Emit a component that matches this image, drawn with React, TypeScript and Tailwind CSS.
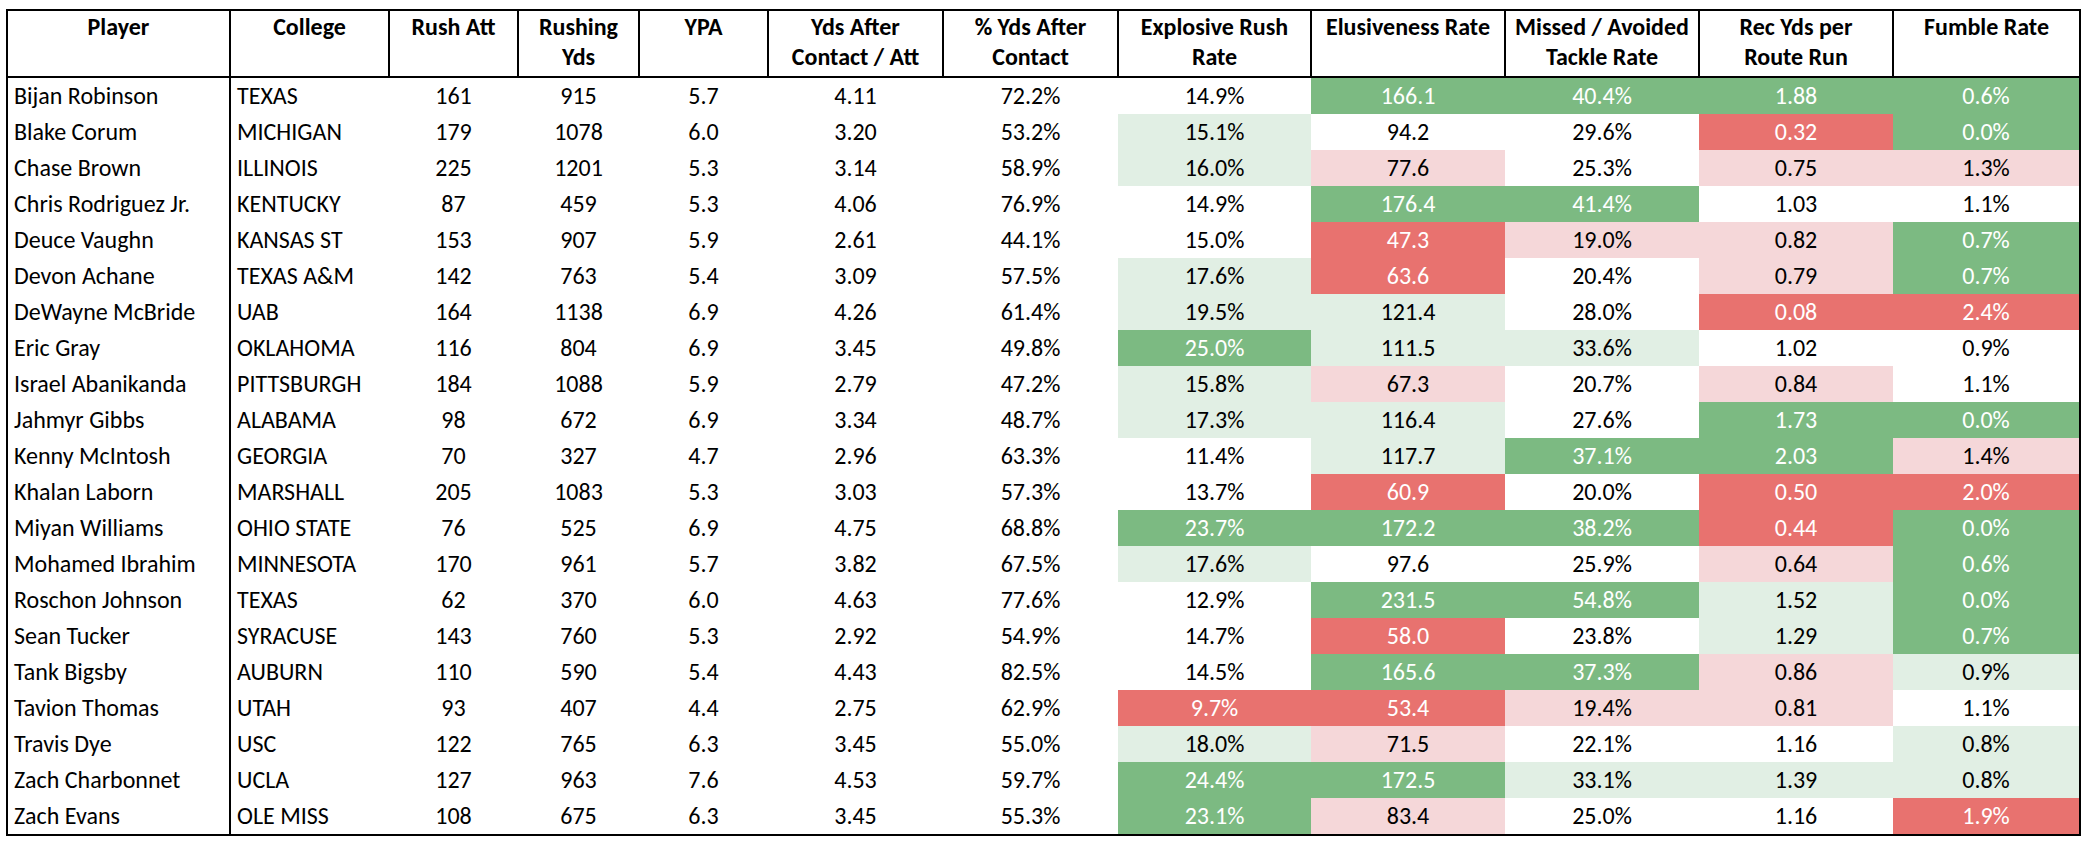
type Tone = "" | "G" | "g" | "r" | "R";

const tone: Record<string, string> = {
  "": "bg-white text-black",
  G: "bg-[#7cba82] text-white",
  g: "bg-[#e1efe4] text-black",
  r: "bg-[#f5d7d9] text-black",
  R: "bg-[#e8726f] text-white",
};

const headers = [
  "Player",
  "College",
  "Rush Att",
  "Rushing Yds",
  "YPA",
  "Yds After Contact / Att",
  "% Yds After Contact",
  "Explosive Rush Rate",
  "Elusiveness Rate",
  "Missed / Avoided Tackle Rate",
  "Rec Yds per Route Run",
  "Fumble Rate",
];

const widths = [223, 159, 129, 121, 129, 175, 175, 193, 194, 194, 194, 187];

// player, college, att, yds, ypa, yac/att, %yac, [value, tone] x5
const rows: [string, string, string, string, string, string, string, [string, Tone][]][] = [
  ["Bijan Robinson", "TEXAS", "161", "915", "5.7", "4.11", "72.2%", [["14.9%", ""], ["166.1", "G"], ["40.4%", "G"], ["1.88", "G"], ["0.6%", "G"]]],
  ["Blake Corum", "MICHIGAN", "179", "1078", "6.0", "3.20", "53.2%", [["15.1%", "g"], ["94.2", ""], ["29.6%", ""], ["0.32", "R"], ["0.0%", "G"]]],
  ["Chase Brown", "ILLINOIS", "225", "1201", "5.3", "3.14", "58.9%", [["16.0%", "g"], ["77.6", "r"], ["25.3%", ""], ["0.75", "r"], ["1.3%", "r"]]],
  ["Chris Rodriguez Jr.", "KENTUCKY", "87", "459", "5.3", "4.06", "76.9%", [["14.9%", ""], ["176.4", "G"], ["41.4%", "G"], ["1.03", ""], ["1.1%", ""]]],
  ["Deuce Vaughn", "KANSAS ST", "153", "907", "5.9", "2.61", "44.1%", [["15.0%", ""], ["47.3", "R"], ["19.0%", "r"], ["0.82", "r"], ["0.7%", "G"]]],
  ["Devon Achane", "TEXAS A&M", "142", "763", "5.4", "3.09", "57.5%", [["17.6%", "g"], ["63.6", "R"], ["20.4%", ""], ["0.79", "r"], ["0.7%", "G"]]],
  ["DeWayne McBride", "UAB", "164", "1138", "6.9", "4.26", "61.4%", [["19.5%", "g"], ["121.4", "g"], ["28.0%", ""], ["0.08", "R"], ["2.4%", "R"]]],
  ["Eric Gray", "OKLAHOMA", "116", "804", "6.9", "3.45", "49.8%", [["25.0%", "G"], ["111.5", "g"], ["33.6%", "g"], ["1.02", ""], ["0.9%", ""]]],
  ["Israel Abanikanda", "PITTSBURGH", "184", "1088", "5.9", "2.79", "47.2%", [["15.8%", "g"], ["67.3", "r"], ["20.7%", ""], ["0.84", "r"], ["1.1%", ""]]],
  ["Jahmyr Gibbs", "ALABAMA", "98", "672", "6.9", "3.34", "48.7%", [["17.3%", "g"], ["116.4", "g"], ["27.6%", ""], ["1.73", "G"], ["0.0%", "G"]]],
  ["Kenny McIntosh", "GEORGIA", "70", "327", "4.7", "2.96", "63.3%", [["11.4%", ""], ["117.7", "g"], ["37.1%", "G"], ["2.03", "G"], ["1.4%", "r"]]],
  ["Khalan Laborn", "MARSHALL", "205", "1083", "5.3", "3.03", "57.3%", [["13.7%", ""], ["60.9", "R"], ["20.0%", ""], ["0.50", "R"], ["2.0%", "R"]]],
  ["Miyan Williams", "OHIO STATE", "76", "525", "6.9", "4.75", "68.8%", [["23.7%", "G"], ["172.2", "G"], ["38.2%", "G"], ["0.44", "R"], ["0.0%", "G"]]],
  ["Mohamed Ibrahim", "MINNESOTA", "170", "961", "5.7", "3.82", "67.5%", [["17.6%", "g"], ["97.6", ""], ["25.9%", ""], ["0.64", "r"], ["0.6%", "G"]]],
  ["Roschon Johnson", "TEXAS", "62", "370", "6.0", "4.63", "77.6%", [["12.9%", ""], ["231.5", "G"], ["54.8%", "G"], ["1.52", "g"], ["0.0%", "G"]]],
  ["Sean Tucker", "SYRACUSE", "143", "760", "5.3", "2.92", "54.9%", [["14.7%", ""], ["58.0", "R"], ["23.8%", ""], ["1.29", "g"], ["0.7%", "G"]]],
  ["Tank Bigsby", "AUBURN", "110", "590", "5.4", "4.43", "82.5%", [["14.5%", ""], ["165.6", "G"], ["37.3%", "G"], ["0.86", "r"], ["0.9%", "g"]]],
  ["Tavion Thomas", "UTAH", "93", "407", "4.4", "2.75", "62.9%", [["9.7%", "R"], ["53.4", "R"], ["19.4%", "r"], ["0.81", "r"], ["1.1%", ""]]],
  ["Travis Dye", "USC", "122", "765", "6.3", "3.45", "55.0%", [["18.0%", "g"], ["71.5", "r"], ["22.1%", ""], ["1.16", ""], ["0.8%", "g"]]],
  ["Zach Charbonnet", "UCLA", "127", "963", "7.6", "4.53", "59.7%", [["24.4%", "G"], ["172.5", "G"], ["33.1%", "g"], ["1.39", "g"], ["0.8%", "g"]]],
  ["Zach Evans", "OLE MISS", "108", "675", "6.3", "3.45", "55.3%", [["23.1%", "G"], ["83.4", "r"], ["25.0%", ""], ["1.16", ""], ["1.9%", "R"]]],
];

export default function App() {
  return (
    <div
      className="min-h-screen bg-white pl-[6px] pt-[9px] text-[24px] text-black"
      style={{ fontFamily: "Carlito, Calibri, 'Liberation Sans Narrow', 'Liberation Sans', sans-serif" }}
    >
      <table className="table-fixed border-collapse border-2 border-black w-[2073px]">
        <colgroup>
          {widths.map((w, i) => (
            <col key={i} style={{ width: w }} />
          ))}
        </colgroup>
        <thead>
          <tr className="h-[67px]">
            {headers.map((h) => (
              <th
                key={h}
                className="border-2 border-black px-2 pt-[1px] align-top text-center font-bold leading-[30px]"
              >
                {h}
              </th>
            ))}
          </tr>
        </thead>
        <tbody>
          {rows.map(([name, college, att, yds, ypa, yac, pct, rated]) => (
            <tr key={name} className="h-[36px] leading-[36px]">
              <td className="border-r-2 border-black pl-[6px] whitespace-nowrap">{name}</td>
              <td className="pl-[6px] whitespace-nowrap">{college}</td>
              <td className="text-center">{att}</td>
              <td className="text-center">{yds}</td>
              <td className="text-center">{ypa}</td>
              <td className="text-center">{yac}</td>
              <td className="text-center">{pct}</td>
              {rated.map(([v, t], i) => (
                <td key={i} className={`text-center ${tone[t]}`}>
                  {v}
                </td>
              ))}
            </tr>
          ))}
        </tbody>
      </table>
    </div>
  );
}
